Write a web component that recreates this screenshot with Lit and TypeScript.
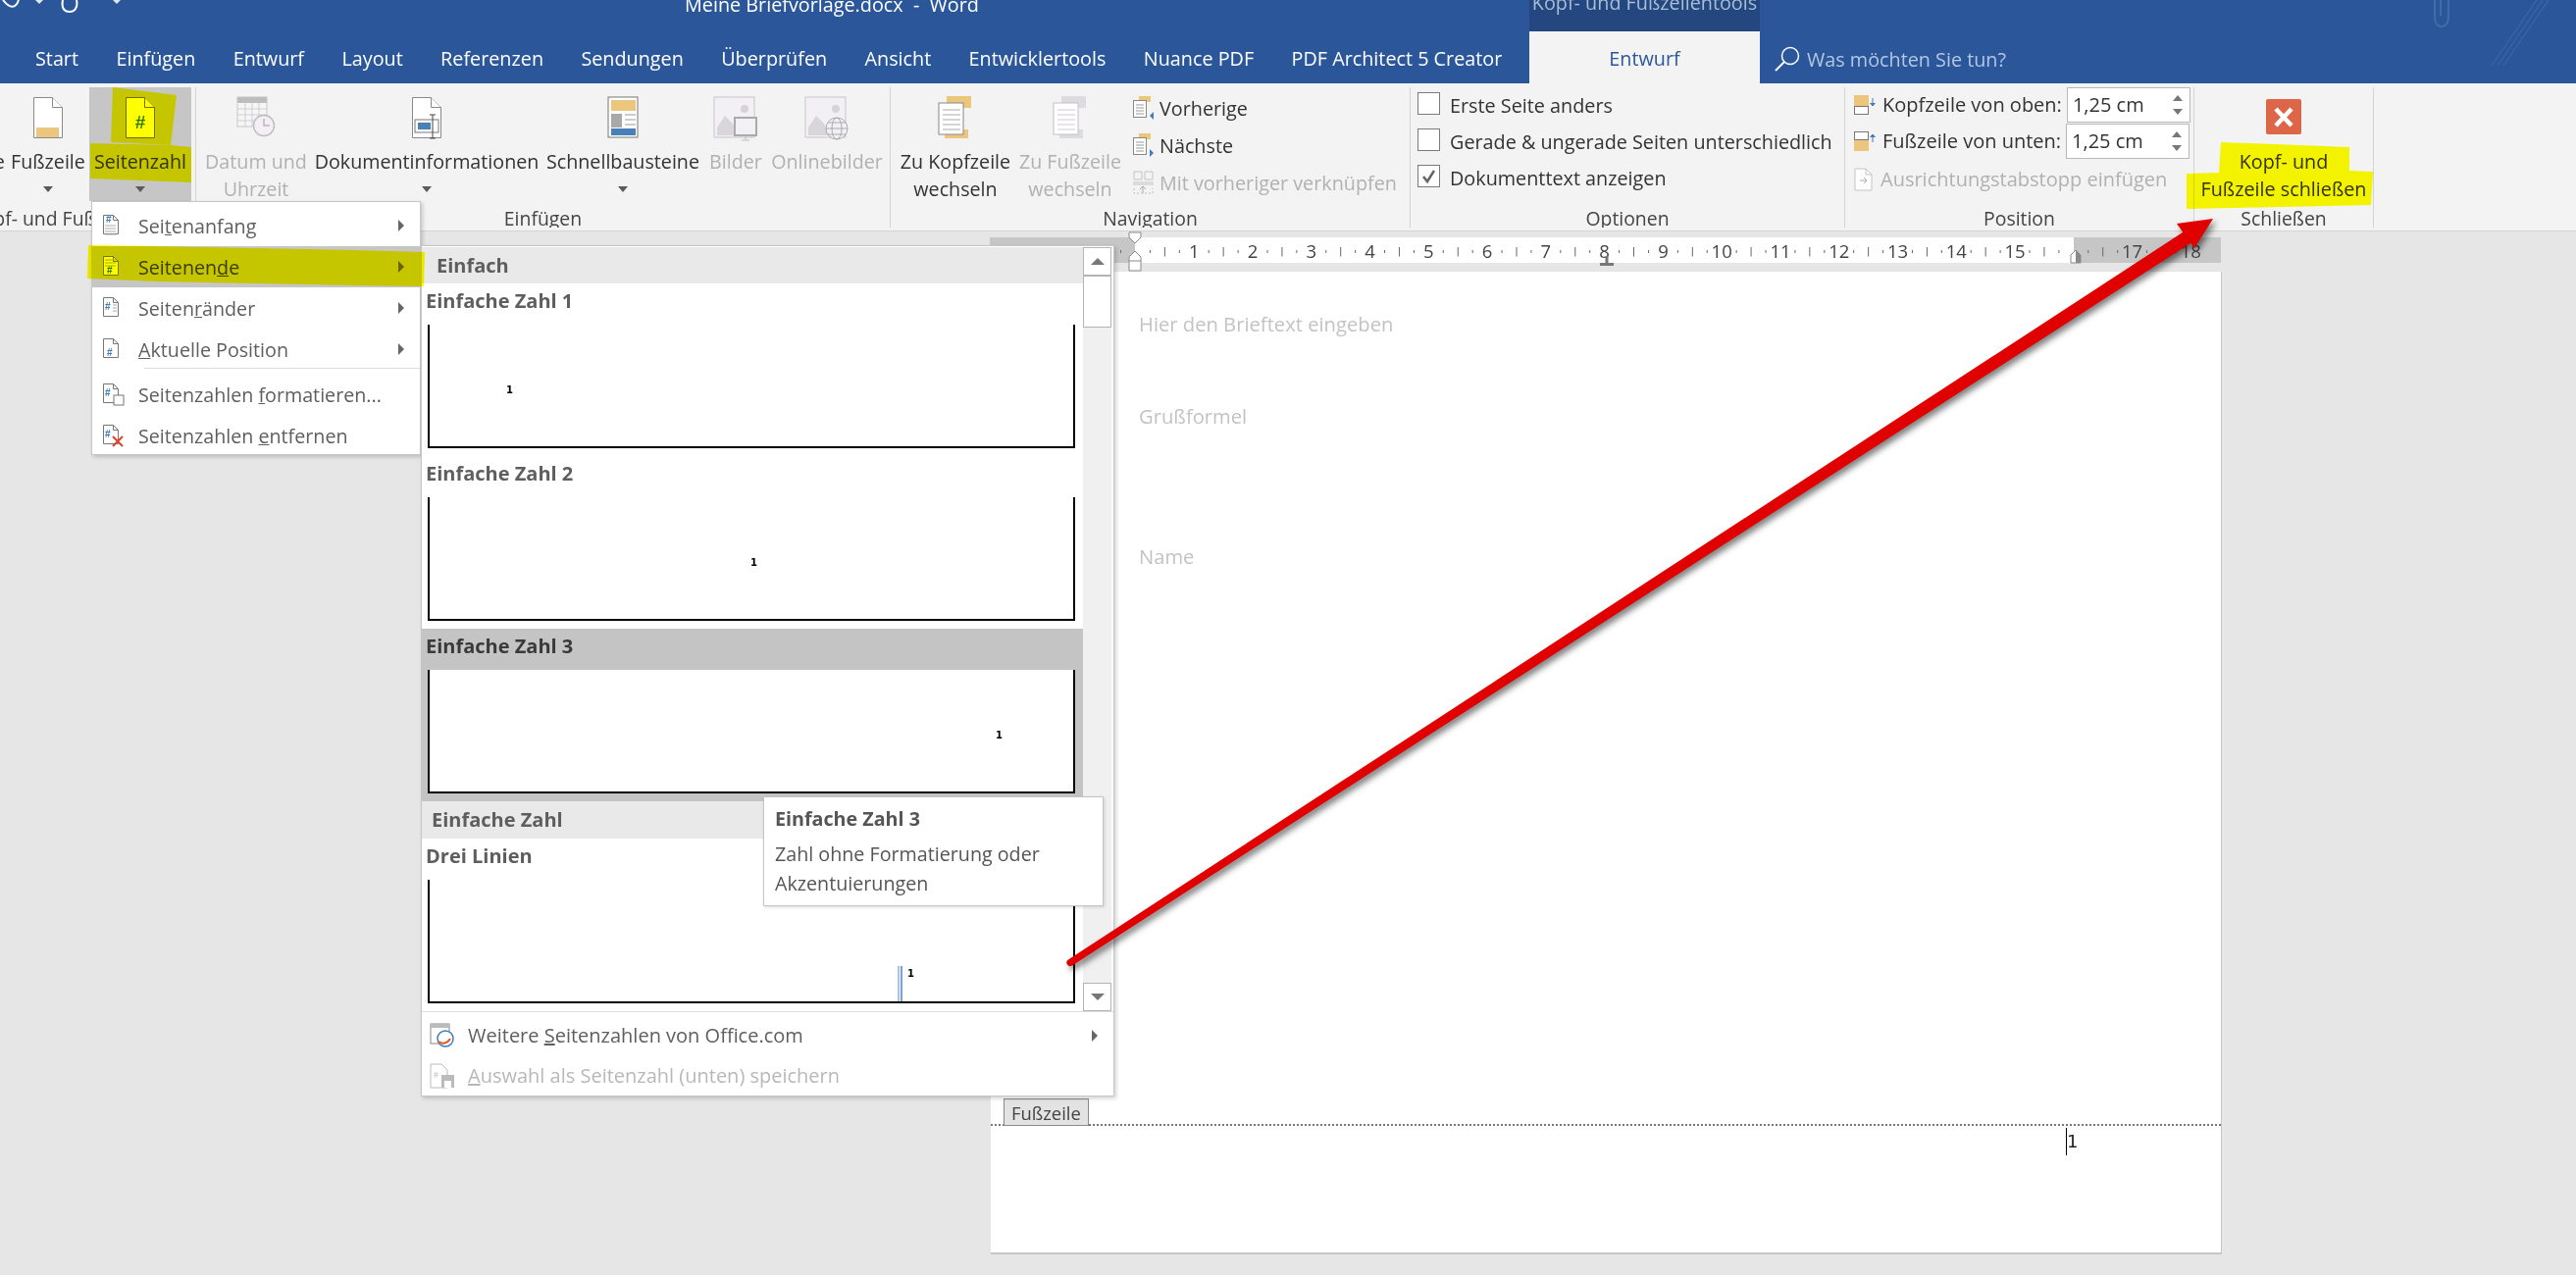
import { LitElement, html, css, svg } from 'lit';
import { customElement } from 'lit/decorators.js';

const FONT = css`"Open Sans", "Noto Sans", "Liberation Sans", sans-serif`;

const page = (fill = '#fff', stroke = '#8a8a8a', extra = svg``) => html`
  <svg width="32" height="44" viewBox="0 0 32 44">
    <path d="M1.5 1.5h19l10 10v31h-29z" fill=${fill} stroke=${stroke} />
    <path d="M20.5 1.5v10h10" fill="#fff" stroke=${stroke} />
    ${extra}
  </svg>
`;

const pair = (a: string, b: string, line: string, frame: string) => html`
  <svg width="36" height="44" viewBox="0 0 36 44">
    <rect x="9" y="0" width="25" height="12" fill=${a} />
    <rect x="7" y="34" width="24" height="9" fill=${b} />
    <rect x="1" y="7" width="25" height="32" fill="#fff" stroke=${frame} />
    ${[14, 19, 24, 29, 34].map((y) => svg`<path d="M5 ${y}h18" stroke=${line} />`)}
  </svg>
`;

const picture = (extra: unknown) => html`
  <svg width="46" height="46" viewBox="0 0 46 46">
    <rect x="1" y="1" width="41" height="41" fill="#f3f0f5" stroke="#c8c5ca" />
    <circle cx="32" cy="13" r="4" fill="#d6d2d8" />
    <path d="M4 40v-8l8-12 8 8 6 12z" fill="#d8d6d8" />
    ${extra}
  </svg>
`;

const ICONS: Record<string, unknown> = {
  footer: page('#fff', '#8a8a8a', svg`<rect x="4" y="32" width="23" height="10" fill="#edc67e" />`),
  number: page('#ffffff', '#6e6e6e', svg`<text x="16" y="33" text-anchor="middle" font-size="19" font-weight="700" font-family="Liberation Sans" fill="#2b7a2b">#</text>`),
  date: html`<svg width="40" height="42" viewBox="0 0 40 42">
    <rect x="1" y="1" width="30" height="30" fill="#f6f6f6" stroke="#c8c8c8" />
    <rect x="1" y="1" width="30" height="6" fill="#bdbdbd" />
    <path d="M1 13h30M1 19h30M1 25h30M9 7v24M16 7v24M23 7v24" stroke="#cfcfcf" />
    <circle cx="28" cy="30" r="10.5" fill="#f3eff4" stroke="#c0bcc2" stroke-width="1.5" />
    <path d="M28 23v7h6" fill="none" stroke="#b8b8b8" stroke-width="1.5" />
  </svg>`,
  docinfo: page('#fff', '#8a8a8a', svg`
    <rect x="4" y="24" width="24" height="13" fill="#fff" stroke="#777" />
    <rect x="7" y="27" width="13" height="7" fill="#4a80b8" />
    <path d="M22 19v24M19 19h6M19 43h6" stroke="#444" fill="none" />
  `),
  quick: html`<svg width="32" height="43" viewBox="0 0 32 43">
    <rect x="1" y="1" width="30" height="41" fill="#fff" stroke="#777" />
    <rect x="4" y="4" width="25" height="11" fill="#edc67e" />
    <rect x="4" y="18" width="11" height="14" fill="#a8a8a8" />
    <path d="M18 19h11M18 24h11M18 29h11" stroke="#999" />
    <rect x="4" y="33" width="25" height="7" fill="#4a80b8" />
  </svg>`,
  pictures: picture(svg`
    <rect x="22" y="22" width="22" height="18" fill="#f3f0f5" stroke="#aaa" stroke-width="2" />
    <path d="M33 40v4M29 45h8" stroke="#bbb" />
  `),
  online: picture(svg`
    <circle cx="33" cy="33" r="11" fill="#f3f0f5" stroke="#aaa" />
    <ellipse cx="33" cy="33" rx="5" ry="11" fill="none" stroke="#aaa" />
    <path d="M22 33h22M24 27h18M24 39h18" stroke="#aaa" />
  `),
  toHeader: pair('#edc67e', '#edc67e', '#aaa', '#888'),
  toFooter: pair('#dedbe0', '#dedbe0', '#cfc8d4', '#c6c0ca'),
  prev: html`<svg width="22" height="24" viewBox="0 0 22 24">
    <rect x="6" y="0" width="12" height="6" fill="#edc67e" />
    <rect x="0.5" y="4.5" width="13" height="17" fill="#fff" stroke="#888" />
    <path d="M3 9h8M3 12h8M3 15h8M3 18h8" stroke="#999" />
    <path d="M21 16v8l-4-4z" fill="#3f7cbc" />
  </svg>`,
  next: html`<svg width="22" height="24" viewBox="0 0 22 24">
    <rect x="6" y="0" width="12" height="6" fill="#edc67e" />
    <rect x="0.5" y="4.5" width="13" height="17" fill="#fff" stroke="#888" />
    <path d="M3 9h8M3 12h8M3 15h8M3 18h8" stroke="#999" />
    <path d="M17 16v8l4-4z" fill="#3f7cbc" />
  </svg>`,
  link: html`<svg width="22" height="24" viewBox="0 0 22 24">
    <path d="M1 1h8v8H1zM12 1h8v8h-8z" fill="none" stroke="#c4c4c4" />
    <rect x="0" y="11" width="21" height="4" fill="#dcdcdc" />
    <path d="M1 18v5h19v-5" fill="none" stroke="#bbb" stroke-dasharray="2 2" />
    <path d="M10 23v-6M7 19l3-3 3 3" fill="none" stroke="#aaa" />
  </svg>`,
  headTop: html`<svg width="22" height="20" viewBox="0 0 22 20">
    <rect x="0" y="0" width="15" height="11" fill="#edc67e" />
    <rect x="0.5" y="11.5" width="14" height="8" fill="#fff" stroke="#777" />
    <path d="M19 3v7M16.5 8l2.500 3 2.500-3" fill="#3f7cbc" stroke="#3f7cbc" />
  </svg>`,
  footBottom: html`<svg width="22" height="20" viewBox="0 0 22 20">
    <rect x="0.5" y="0.5" width="14" height="8" fill="#fff" stroke="#777" />
    <rect x="0" y="9" width="15" height="11" fill="#edc67e" />
    <path d="M19 11V4M16.500 6l2.500-3 2.500 3" fill="#3f7cbc" stroke="#3f7cbc" />
  </svg>`,
  tabStop: html`<svg width="20" height="24" viewBox="0 0 20 24">
    <path d="M1 1h11l6 6v16H1z" fill="#fff" stroke="#c4c4c4" />
    <path d="M12 1v6h6" fill="none" stroke="#c4c4c4" />
    <path d="M6 13h7M10 10l3 3-3 3" fill="none" stroke="#aaa" />
  </svg>`,
};

const menuDoc = (hash: string, body: unknown, fill = '#fff') => html`
  <svg width="24" height="24" viewBox="0 0 24 24">
    <path d="M6.500 2.500h10l5 5v14h-15z" fill=${fill} stroke="#777" transform="translate(-5 -1)" />
    <path d="M11.500 1.500v5h5" fill="none" stroke="#777" />
    <text x=${hash === 'top' ? 4 : hash === 'left' ? 3 : 5} y=${hash === 'top' ? 9 : hash === 'left' ? 14 : 19}
      font-size="10" font-weight="700" font-family="Liberation Sans" fill=${hash === 'end' ? '#2b7a2b' : '#3f7cbc'}>#</text>
    ${body}
  </svg>
`;

const lines = (ys: number[], x1 = 4, x2 = 14) =>
  ys.map((y) => svg`<path d="M${x1} ${y}h${x2 - x1}" stroke="#aaa" />`);

interface RibbonButton {
  label: string[];
  icon: string;
  width: number;
  off?: boolean;
  more?: boolean;
  hot?: boolean;
}

const INSERT: RibbonButton[] = [
  { label: ['Datum und', 'Uhrzeit'], icon: 'date', width: 122, off: true },
  { label: ['Dokumentinformationen'], icon: 'docinfo', width: 226, more: true },
  { label: ['Schnellbausteine'], icon: 'quick', width: 174, more: true },
  { label: ['Bilder'], icon: 'pictures', width: 56, off: true },
  { label: ['Onlinebilder'], icon: 'online', width: 130, off: true },
];

const NAV: RibbonButton[] = [
  { label: ['Zu Kopfzeile', 'wechseln'], icon: 'toHeader', width: 132 },
  { label: ['Zu Fußzeile', 'wechseln'], icon: 'toFooter', width: 102, off: true },
];

const TABS = ['Start', 'Einfügen', 'Entwurf', 'Layout', 'Referenzen', 'Sendungen', 'Überprüfen', 'Ansicht', 'Entwicklertools', 'Nuance PDF', 'PDF Architect 5 Creator'];

@customElement('word-ribbon')
export class WordRibbon extends LitElement {
  static styles = css`
    :host {
      display: block;
      font-family: ${FONT};
      font-size: 19.8px;
      color: #333;
    }
    .title {
      display: grid;
      grid-template-columns: 1559px 235px 1fr;
      height: 32px;
      background: #2b579a;
      overflow: hidden;
    }
    .title-left {
      display: flex;
    }
    .qat {
      width: 130px;
      flex: none;
    }
    .doc-name {
      margin-left: 568px;
      color: #fff;
      line-height: 10px;
      white-space: pre;
    }
    .context {
      background: #23477e;
      color: #a9bcd8;
      line-height: 6px;
      text-align: center;
    }
    .tabs {
      display: flex;
      height: 53px;
      background: #2b579a;
      color: #fff;
      white-space: nowrap;
    }
    .tablist {
      display: flex;
      flex: 0 0 1559px;
      box-sizing: border-box;
      padding-left: 16.800px;
    }
    .tab {
      padding: 0 19.200px;
      line-height: 56px;
    }
    .tab.active {
      flex: 0 0 235px;
      padding: 0;
      background: #f3f3f3;
      color: #2b579a;
      text-align: center;
    }
    .search {
      display: flex;
      align-items: center;
      gap: 7px;
      margin-left: 15px;
      padding-top: 3px;
      color: #b4c6e0;
    }
    .bar {
      display: flex;
      padding: 4px 0 3px;
      box-sizing: border-box;
      background: #f3f3f3;
      border-bottom: 1px solid #d4d4d4;
      height: 151px;
      white-space: nowrap;
    }
    .group {
      display: flex;
      flex-direction: column;
      flex: none;
      border-right: 1px solid #d4d4d4;
      box-sizing: border-box;
      overflow: hidden;
    }
    .group.head {
      width: 200px;
    }
    .group.insert {
      width: 708px;
    }
    .group.nav {
      width: 530px;
    }
    .group.options {
      width: 443px;
    }
    .group.position {
      width: 356px;
    }
    .group.close {
      width: 183px;
    }
    .body {
      display: flex;
      height: 124px;
      flex: none;
    }
    .name {
      height: 20px;
      line-height: 20px;
      text-align: center;
      color: #444;
      font-size: 19.4px;
    }
    .head .name {
      width: 180px;
      margin-left: -36px;
    }
    .head .body {
      justify-content: flex-end;
      padding-right: 4px;
    }
    .big {
      display: flex;
      flex-direction: column;
      align-items: center;
      flex: none;
      height: 117px;
      margin-top: -1px;
      padding-top: 10px;
      box-sizing: border-box;
      font-size: 19.7px;
    }
    .big .ico {
      height: 53px;
      flex: none;
    }
    .big .ln {
      line-height: 28px;
      height: 28px;
    }
    .big.off,
    .row.off {
      color: #b1b1b1;
    }
    .big.hot {
      background: #c6c6c6;
    }
    .caret {
      width: 0;
      height: 0;
      border: 5px solid transparent;
      border-top: 6px solid #5a5a5a;
      border-bottom: 0;
      margin-top: 11px;
    }
    .rows {
      display: flex;
      flex-direction: column;
      margin-left: 13px;
      padding-top: 2px;
    }
    .row {
      display: flex;
      align-items: center;
      gap: 5px;
      height: 38px;
    }
    .checks {
      display: flex;
      flex-direction: column;
      margin: -2px 0 0 7px;
      font-size: 19.8px;
    }
    .check {
      display: flex;
      align-items: center;
      gap: 10px;
      height: 37px;
    }
    .check span {
      padding-top: 3px;
    }
    .box {
      width: 23px;
      height: 23px;
      box-sizing: border-box;
      border: 1px solid #7a7a7a;
      background: #fff;
      flex: none;
    }
    .fields {
      display: flex;
      flex-direction: column;
      margin: -1px 0 0 9px;
      font-size: 20px;
    }
    .field {
      display: flex;
      align-items: center;
      gap: 7px;
      height: 37px;
    }
    .field.off {
      margin-top: 2px;
      color: #b1b1b1;
    }
    .spin {
      display: flex;
      align-items: center;
      justify-content: space-between;
      width: 126px;
      height: 36px;
      box-sizing: border-box;
      padding: 0 7px 0 5px;
      margin-left: -2px;
      border: 1px solid #b8b8b8;
      background: #fff;
      color: #333;
    }
    .arrows {
      display: flex;
      flex-direction: column;
      gap: 8px;
    }
    .up,
    .down {
      width: 0;
      height: 0;
      border: 5px solid transparent;
    }
    .up {
      border-top: 0;
      border-bottom: 6px solid #777;
    }
    .down {
      border-bottom: 0;
      border-top: 6px solid #777;
    }
    .closer {
      display: flex;
      flex-direction: column;
      align-items: center;
      width: 100%;
      padding-top: 12px;
    }
    .closer .ln {
      line-height: 28px;
      height: 28px;
    }
    .closer svg {
      margin-bottom: 14px;
    }
  `;

  private big(b: RibbonButton) {
    return html`
      <div class="big ${b.off ? 'off' : ''} ${b.hot ? 'hot' : ''}" style="width:${b.width}px">
        <div class="ico">${ICONS[b.icon]}</div>
        ${b.label.map((l) => html`<div class="ln">${l}</div>`)}
        ${b.more ? html`<div class="caret"></div>` : ''}
      </div>
    `;
  }

  render() {
    return html`
      <div class="title">
        <div class="title-left">
          <svg class="qat" height="32" viewBox="0 0 130 32">
            <path d="M3 0c7 9 13 9 16 0" fill="none" stroke="#fff" stroke-width="2" />
            <path d="M36 0h8l-4 4zM115 0h8l-4 4z" fill="#dfe6f1" />
            <path d="M64 0c-2 10 3 12 7 12s9-3 7-12" fill="none" stroke="#fff" stroke-width="2" />
          </svg>
          <div class="doc-name">Meine Briefvorlage.docx  -  Word</div>
        </div>
        <div class="context">Kopf- und Fußzeilentools</div>
      </div>
      <div class="tabs">
        <div class="tablist">${TABS.map((t) => html`<div class="tab">${t}</div>`)}</div>
        <div class="tab active">Entwurf</div>
        <div class="search">
          <svg width="26" height="26" viewBox="0 0 26 26">
            <circle cx="16" cy="10" r="8.500" fill="none" stroke="#fff" stroke-width="1.500" />
            <path d="M10 16L1 25" stroke="#fff" stroke-width="2" />
          </svg>
          <span>Was möchten Sie tun?</span>
        </div>
      </div>
      <div class="bar">
        <div class="group head">
          <div class="body">
            ${this.big({ label: ['Kopfzeile'], icon: 'footer', width: 88, more: true })}
            ${this.big({ label: ['Fußzeile'], icon: 'footer', width: 84, more: true })}
            ${this.big({ label: ['Seitenzahl'], icon: 'number', width: 104, more: true, hot: true })}
          </div>
          <div class="name">Kopf- und Fußzeile</div>
        </div>
        <div class="group insert">
          <div class="body">${INSERT.map((b) => this.big(b))}</div>
          <div class="name">Einfügen</div>
        </div>
        <div class="group nav">
          <div class="body">
            ${NAV.map((b) => this.big(b))}
            <div class="rows">
              <div class="row">${ICONS.prev}<span>Vorherige</span></div>
              <div class="row">${ICONS.next}<span>Nächste</span></div>
              <div class="row off">${ICONS.link}<span>Mit vorheriger verknüpfen</span></div>
            </div>
          </div>
          <div class="name">Navigation</div>
        </div>
        <div class="group options">
          <div class="body">
            <div class="checks">
              <div class="check"><div class="box"></div><span>Erste Seite anders</span></div>
              <div class="check"><div class="box"></div><span>Gerade &amp; ungerade Seiten unterschiedlich</span></div>
              <div class="check">
                <div class="box">
                  <svg width="21" height="21" viewBox="0 0 21 21"><path d="M5 11l4 5 7-11" fill="none" stroke="#666" stroke-width="2.500" /></svg>
                </div>
                <span>Dokumenttext anzeigen</span>
              </div>
            </div>
          </div>
          <div class="name">Optionen</div>
        </div>
        <div class="group position">
          <div class="body">
            <div class="fields">
              <div class="field">
                ${ICONS.headTop}<span>Kopfzeile von oben:</span>
                <div class="spin"><span>1,25 cm</span><div class="arrows"><div class="up"></div><div class="down"></div></div></div>
              </div>
              <div class="field">
                ${ICONS.footBottom}<span>Fußzeile von unten:</span>
                <div class="spin"><span>1,25 cm</span><div class="arrows"><div class="up"></div><div class="down"></div></div></div>
              </div>
              <div class="field off">${ICONS.tabStop}<span>Ausrichtungstabstopp einfügen</span></div>
            </div>
          </div>
          <div class="name">Position</div>
        </div>
        <div class="group close">
          <div class="body">
            <div class="closer">
              <svg width="36" height="36" viewBox="0 0 36 36">
                <rect width="36" height="36" rx="2" fill="#dd6648" />
                <path d="M10 10l16 17M26 10L10 27" stroke="#fff" stroke-width="4.500" />
              </svg>
              <div class="ln">Kopf- und</div>
              <div class="ln">Fußzeile schließen</div>
            </div>
          </div>
          <div class="name">Schließen</div>
        </div>
      </div>
    `;
  }
}

const RULER_UNIT = 59.77;
const RULER_ZERO = 148.5;

@customElement('doc-area')
export class DocArea extends LitElement {
  static styles = css`
    :host {
      display: block;
      font-family: ${FONT};
      font-size: 20.2px;
      padding-left: 1010px;
    }
    .ruler {
      display: flex;
      position: relative;
      width: 1255px;
      height: 26px;
      margin: 6px 0 9px -1px;
    }
    .edge {
      background: #c6c6c6;
    }
    .edge.left {
      width: 148px;
    }
    .edge.right {
      flex: 1;
    }
    .paper {
      flex: 0 0 957px;
      background: #fff;
    }
    .ruler svg {
      position: absolute;
      left: 0;
      top: -6px;
      overflow: visible;
    }
    .page {
      display: flex;
      flex-direction: column;
      width: 1255px;
      height: 1002px;
      box-sizing: border-box;
      background: #fff;
      border-right: 1px solid #c6c6c6;
      border-bottom: 2px solid #c6c6c6;
    }
    .text {
      flex: 1;
      padding-left: 151px;
      color: #c3c3c3;
    }
    .text div {
      line-height: 26px;
    }
    .text .a {
      margin-top: 40px;
    }
    .text .b {
      margin-top: 68px;
    }
    .text .c {
      margin-top: 117px;
    }
    .foot {
      position: relative;
      height: 131px;
      flex: none;
      border-top: 2px dotted #777;
      box-sizing: border-box;
    }
    .tag {
      position: absolute;
      left: 13px;
      bottom: 100%;
      padding: 0 7px;
      height: 28px;
      line-height: 28px;
      box-sizing: border-box;
      font-size: 18.4px;
      color: #444;
      background: #e3e3e3;
      border: 1px solid #8a8a8a;
    }
    .num {
      display: flex;
      margin-left: 1096px;
      height: 28px;
      line-height: 28px;
      margin-top: 2px;
      font-family: 'DejaVu Sans', sans-serif;
      font-size: 18px;
      color: #222;
      border-left: 1px solid #000;
      width: 20px;
    }
  `;

  render() {
    const marks = [];
    for (let q = -1; q <= 72; q++) {
      const x = RULER_ZERO + (q / 4) * RULER_UNIT;
      const n = q / 4;
      if (q % 4 === 0) {
        if (n > 0 && n !== 16) {
          marks.push(svg`<text x=${x} y="26.500" text-anchor="middle" font-size="18.500" fill="#444" font-family="Open Sans">${n}</text>`);
        }
      } else if (q % 2 === 0) {
        marks.push(svg`<path d="M${x} 16v9.500" stroke="#666" />`);
      } else {
        marks.push(svg`<path d="M${x} 19v3" stroke="#666" />`);
      }
    }
    return html`
      <div class="ruler">
        <div class="edge left"></div>
        <div class="paper"></div>
        <div class="edge right"></div>
        <svg width="1255" height="40" viewBox="0 0 1255 40">
          ${marks}
          <path d="M142 1h12v5l-6 6-6-6zM142 40V26l6-6 6 6v14z" fill="#fff" stroke="#8a8a8a" />
          <path d="M142 30h12" stroke="#8a8a8a" />
          <path d="M1102 32v-8l5-5 5 5v8z" fill="#fff" stroke="#8a8a8a" />
          <path d="M1107 19v13h5v-8z" fill="#8a8a8a" />
          <path d="M627.500 25h3v7h5.500v3h-14v-3h5.500z" fill="#777" />
        </svg>
      </div>
      <div class="page">
        <div class="text">
          <div class="a">Hier den Brieftext eingeben</div>
          <div class="b">Grußformel</div>
          <div class="c">Name</div>
        </div>
        <div class="foot">
          <div class="tag">Fußzeile</div>
          <div class="num">1</div>
        </div>
      </div>
    `;
  }
}

interface Preview {
  title: string;
  x: number;
  y: number;
  hot?: boolean;
  bars?: boolean;
}

const SECTION_ONE: Preview[] = [
  { title: 'Einfache Zahl 1', x: 78, y: 60 },
  { title: 'Einfache Zahl 2', x: 327, y: 60 },
  { title: 'Einfache Zahl 3', x: 577, y: 60, hot: true },
];

@customElement('page-menu')
export class PageMenu extends LitElement {
  static styles = css`
    :host {
      display: block;
      font-family: ${FONT};
      font-size: 19.7px;
      color: #5e5e5e;
    }
    .menu {
      position: absolute;
      left: 93px;
      top: 205px;
      width: 336px;
      height: 259px;
      box-sizing: border-box;
      padding-top: 3px;
      background: #fff;
      border: 1px solid #c6c6c6;
      box-shadow: 2px 2px 4px rgba(0, 0, 0, 0.18);
      white-space: nowrap;
    }
    .item {
      display: flex;
      align-items: center;
      height: 42px;
      padding-left: 10px;
    }
    .item svg {
      width: 24px;
      flex: none;
    }
    .item span {
      margin-left: 13px;
      flex: 1;
    }
    .item.hot {
      background: #c6c6c6;
      color: #3c3c3c;
    }
    .tri {
      width: 0;
      height: 0;
      margin-right: 16px;
      border: 6px solid transparent;
      border-left: 6px solid #666;
      border-right: 0;
    }
    .rule {
      height: 1px;
      margin: -2px 0 5px 53px;
      background: #dcdcdc;
    }
    .gallery {
      position: absolute;
      left: 429px;
      top: 250px;
      width: 707px;
      box-sizing: border-box;
      padding-top: 1px;
      background: #fff;
      border: 1px solid #c6c6c6;
      box-shadow: 2px 2px 4px rgba(0, 0, 0, 0.18);
      white-space: nowrap;
      font-size: 20px;
    }
    .scrollarea {
      display: flex;
      height: 779px;
      margin-bottom: 3px;
      border-bottom: 1px solid #dcdcdc;
    }
    .list {
      flex: 0 0 674px;
    }
    .sec {
      height: 37px;
      line-height: 37px;
      padding-left: 15px;
      background: #e9e9e9;
      font-weight: 700;
    }
    .sec.second {
      height: 38px;
      line-height: 38px;
      padding-left: 10px;
    }
    .card {
      height: 176px;
      box-sizing: border-box;
    }
    .card.hot {
      background: #c4c4c4;
      color: #3a3a3a;
    }
    .card b {
      display: block;
      height: 42px;
      line-height: 36px;
      padding-left: 4px;
    }
    .sheet {
      display: block;
      box-sizing: border-box;
      width: 660px;
      height: 126px;
      margin-left: 6px;
      background: #fff;
      border: 2px solid #000;
      border-top: 0;
      font: 700 10px/14px 'DejaVu Sans', sans-serif;
      color: #000;
      position: relative;
    }
    .bars {
      position: absolute;
      bottom: 0;
      left: 477px;
      width: 5px;
      height: 36px;
      background: linear-gradient(90deg, #a9c4e8 0 2px, #fff 2px 3px, #7aa0d8 3px);
    }
    .scroll {
      display: flex;
      flex-direction: column;
      flex: 0 0 29px;
      background: #f0f0f0;
    }
    .sbtn {
      display: flex;
      align-items: center;
      justify-content: center;
      height: 29px;
      box-sizing: border-box;
      background: #fff;
      border: 1px solid #b4b4b4;
    }
    .sbtn .up,
    .sbtn .down {
      width: 0;
      height: 0;
      border: 7px solid transparent;
    }
    .sbtn .up {
      border-top: 0;
      border-bottom: 7px solid #777;
    }
    .sbtn .down {
      border-bottom: 0;
      border-top: 7px solid #777;
    }
    .thumb {
      height: 53px;
      box-sizing: border-box;
      background: #fff;
      border: 1px solid #b4b4b4;
    }
    .fill {
      flex: 1;
    }
    .gmore {
      display: flex;
      align-items: center;
      height: 41px;
      padding-left: 8px;
    }
    .gmore svg {
      flex: none;
      width: 26px;
    }
    .gmore span {
      margin-left: 13px;
      flex: 1;
    }
    .gmore .tri {
      margin-right: 16px;
    }
    .gmore.off {
      color: #b8b8b8;
    }
    .tooltip {
      position: absolute;
      left: 778px;
      top: 812px;
      width: 347px;
      height: 112px;
      box-sizing: border-box;
      padding: 8px 11px;
      background: #fff;
      border: 1px solid #c6c6c6;
      box-shadow: 1px 1px 3px rgba(0, 0, 0, 0.15);
      line-height: 30px;
      color: #555;
    }
    .tooltip b {
      display: block;
      margin-bottom: 7px;
      line-height: 28px;
    }
  `;

  private card(p: Preview) {
    return html`
      <div class="card ${p.hot ? 'hot' : ''}">
        <b>${p.title}</b>
        <div class="sheet" style="padding:${p.y}px 0 0 ${p.x}px">
          1${p.bars ? html`<div class="bars"></div>` : ''}
        </div>
      </div>
    `;
  }

  render() {
    return html`
      <div class="menu">
        <div class="item">
          ${menuDoc('top', lines([12, 15, 18, 21], 3, 14))}
          <span>Sei<u>t</u>enanfang</span><div class="tri"></div>
        </div>
        <div class="item hot">
          ${menuDoc('end', lines([5, 8, 11], 3, 14), '#fff')}
          <span>Seitenen<u>d</u>e</span><div class="tri"></div>
        </div>
        <div class="item">
          ${menuDoc('left', lines([9, 12, 15], 11, 15))}
          <span>Seiten<u>r</u>änder</span><div class="tri"></div>
        </div>
        <div class="item">
          ${menuDoc('low', '')}
          <span><u>A</u>ktuelle Position</span><div class="tri"></div>
        </div>
        <div class="rule"></div>
        <div class="item">
          ${menuDoc('left', svg`<rect x="12" y="13" width="10" height="10" fill="#fff" stroke="#777" />`)}
          <span>Seitenzahlen <u>f</u>ormatieren...</span>
        </div>
        <div class="item">
          ${menuDoc('left', svg`<path d="M11 13l10 10M21 13L11 23" stroke="#d9452e" stroke-width="2" />`)}
          <span>Seitenzahlen <u>e</u>ntfernen</span>
        </div>
      </div>
      <div class="gallery">
        <div class="scrollarea">
          <div class="list">
            <div class="sec">Einfach</div>
            ${SECTION_ONE.map((p) => this.card(p))}
            <div class="sec second">Einfache Zahl</div>
            ${this.card({ title: 'Drei Linien', x: 487, y: 89, bars: true })}
          </div>
          <div class="scroll">
            <div class="sbtn"><div class="up"></div></div>
            <div class="thumb"></div>
            <div class="fill"></div>
            <div class="sbtn"><div class="down"></div></div>
          </div>
        </div>
        <div class="gmore">
          <svg height="26" viewBox="0 0 26 26">
            <rect x="1" y="1" width="19" height="20" fill="#fff" stroke="#888" />
            <rect x="1" y="1" width="19" height="4" fill="#bbb" />
            <circle cx="16" cy="16" r="8" fill="#fff" stroke="#3f7cbc" stroke-width="1.500" />
            <path d="M9 19c4 3 9 2 12-3" fill="none" stroke="#e2592a" stroke-width="2" />
          </svg>
          <span>Weitere <u>S</u>eitenzahlen von Office.com</span><div class="tri"></div>
        </div>
        <div class="gmore off">
          <svg height="26" viewBox="0 0 26 26">
            <path d="M1 1h11l6 6v18H1z" fill="#fff" stroke="#bbb" />
            <text x="4" y="15" font-size="9" fill="#bbb" font-family="Liberation Sans">#</text>
            <rect x="12" y="12" width="13" height="13" fill="#bbb" />
            <rect x="15" y="18" width="7" height="7" fill="#fff" />
          </svg>
          <span><u>A</u>uswahl als Seitenzahl (unten) speichern</span>
        </div>
      </div>
      <div class="tooltip">
        <b>Einfache Zahl 3</b>
        Zahl ohne Formatierung oder<br />Akzentuierungen
      </div>
    `;
  }
}

@customElement('app-root')
export class AppRoot extends LitElement {
  static styles = css`
    :host {
      display: block;
      position: relative;
      width: 2626px;
      height: 1300px;
      overflow: hidden;
      background: #e6e6e6;
    }
    .marks {
      position: absolute;
      inset: 0;
      pointer-events: none;
    }
    .marker {
      mix-blend-mode: multiply;
    }
    .arrow {
      filter: drop-shadow(3px 4px 3px rgba(0, 0, 0, 0.5));
    }
  `;

  render() {
    return html`
      <word-ribbon></word-ribbon>
      <doc-area></doc-area>
      <page-menu></page-menu>
      <svg class="marks marker" width="2626" height="1300" viewBox="0 0 2626 1300">
        <g fill="#ffff00">
          <path d="M115 89L180 97 174 148 113 145z" />
          <path d="M92 146L174 148 195 150V186L92 182z" />
          <path d="M90 250L160 251 260 253 363 255 433 257 432 292 363 291 260 289 160 287 89 284z" />
          <path d="M2264 145L2395 150V174L2419 175 2417 209 2327 211 2229 213V177L2262 176z" />
        </g>
      </svg>
      <svg class="marks" width="2626" height="1300" viewBox="0 0 2626 1300">
        <path d="M2482 0v18c0 12 14 12 14 0V0M2488 0v16" fill="none" stroke="#406ca8" stroke-width="2" />
        <path d="M2586 0l-46 67M2592 0l-46 67M2598 0l-46 67" fill="none" stroke="#406ca8" />
        <g class="arrow" fill="#e00000">
          <path d="M1089 978.500L2228 235 2236 246 1093 984.500a3.500 3.500 0 0 1-4-6z" />
          <path d="M2256 223L2219 228 2237 253z" />
        </g>
      </svg>
    `;
  }
}
